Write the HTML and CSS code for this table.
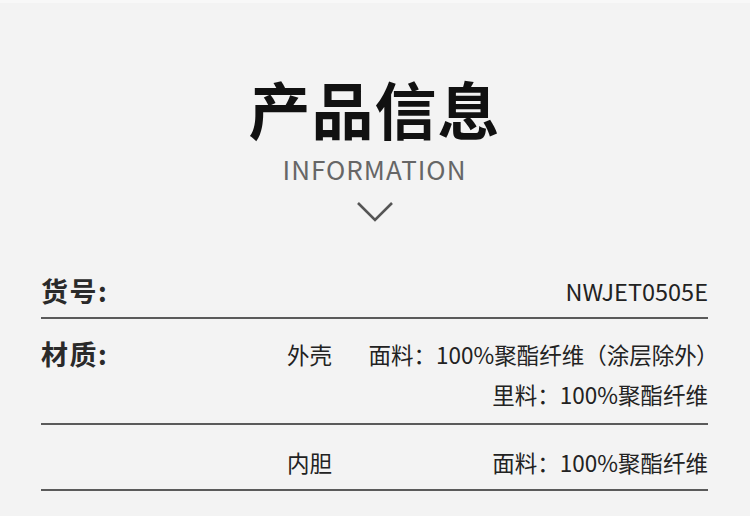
FILE: index.html
```html
<!DOCTYPE html>
<html lang="zh">
<head>
<meta charset="utf-8">
<link rel="stylesheet" href="styles.css">
</head>
<body>
<div class="page">
  <header class="head">
    <h1 class="title">产品信息</h1>
    <div class="subtitle">INFORMATION</div>
    <svg class="chevron" width="38" height="22" viewBox="0 0 38 22"><polyline points="2,2 19,19 36,2" fill="none" stroke="#555" stroke-width="2.6"/></svg>
  </header>
  <div class="table">
    <div class="row row-sku">
      <div class="label">货号:</div>
      <div class="value">NWJET0505E</div>
    </div>
    <div class="row row-mat">
      <div class="label">材质:</div>
      <div class="part">外壳</div>
      <div class="values">
        <div>面料：100%聚酯纤维（涂层除外<span class="tight">）</span></div>
        <div>里料：100%聚酯纤维</div>
      </div>
    </div>
    <div class="row row-inner">
      <div class="label"></div>
      <div class="part">内胆</div>
      <div class="values">
        <div>面料：100%聚酯纤维</div>
      </div>
    </div>
  </div>
</div>
</body>
</html>
```
FILE: styles.css
```css
html, body {
  margin: 0;
  padding: 0;
}
body {
  background: #f3f3f3;
  font-family: "Noto Sans CJK SC", "Noto Sans", sans-serif;
  color: #222;
  width: 750px;
  height: 516px;
  overflow: hidden;
}
.page {
  border-top: 3px solid #f8f8f8;
  padding: 0 42px 0 41px;
}
.head {
  display: flex;
  flex-direction: column;
  align-items: center;
}
.title {
  margin: 74px 0 0;
  font-size: 62px;
  line-height: 62px;
  font-weight: 700;
  color: #111;
  letter-spacing: 1px;
}
.subtitle {
  margin-top: 17px;
  font-size: 26px;
  line-height: 26px;
  color: #666;
  letter-spacing: 1px;
}
.chevron {
  display: block;
  margin-top: 19px;
}
.row {
  display: flex;
  border-bottom: 2px solid #5a5a5a;
  line-height: 40px;
  font-size: 22.5px;
}
.label {
  width: 246px;
  font-size: 27px;
  font-weight: 700;
  color: #2a2a2a;
  letter-spacing: 1.5px;
}
.part {
  color: #222;
}
.value, .values {
  flex: 1;
  text-align: right;
}
.tight {
  font-feature-settings: "palt";
}
.row-sku {
  margin-top: 48px;
  padding-bottom: 6px;
}
.row-sku .value {
  font-size: 23.5px;
}
.row-mat {
  padding-top: 15px;
  padding-bottom: 9px;
}
.row-inner {
  padding-top: 17px;
  padding-bottom: 7px;
}
```
